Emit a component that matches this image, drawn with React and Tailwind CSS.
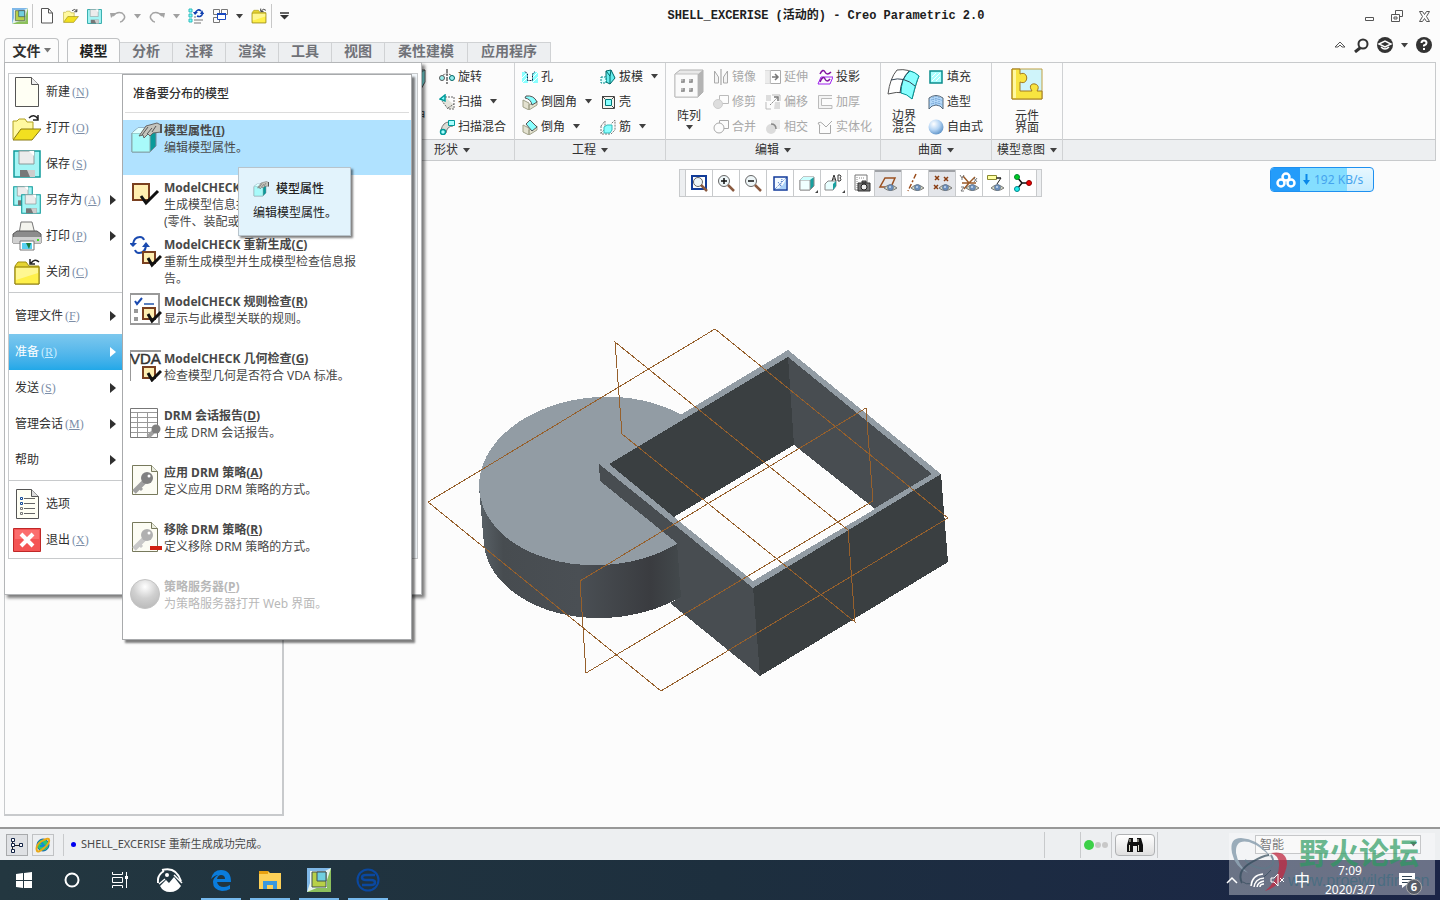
import React from 'react';

const Svg = ({ w = 16, h = w, children, className = '' }) => (
  <svg width={w} height={h} viewBox={`0 0 ${w} ${h}`} fill="none" className={`shrink-0 ${className}`} aria-hidden="true">
    {children}
  </svg>
);

const Caret = ({ className = 'text-[#404040]' }) => (
  <Svg w={7} h={5} className={className}>
    <path d="M0 0h7L3.500 4.500z" fill="currentColor" />
  </Svg>
);

/* ---------- shared icon parts ---------- */

const Eye = ({ x = 8, y = 11 }) => (
  <g transform={`translate(${x} ${y})`}>
    <path d="M0 4Q6-2 13 4Q6 9 0 4z" fill="#d8dcc8" stroke="#777" />
    <circle cx="6.500" cy="3.500" r="3" fill="#6b8fbe" stroke="#678" strokeWidth=".8" />
    <circle cx="6" cy="3" r="1" fill="#cde" />
  </g>
);

const CheckMark = ({ x = 0, y = 0 }) => (
  <g transform={`translate(${x} ${y})`}>
    <path d="M1 1h12v11H1z" fill="#ffeeb0" stroke="#7a4020" strokeWidth="2" />
    <path d="M6 7l4 7L19 5" stroke="#111" strokeWidth="3" />
  </g>
);

const KeyShape = ({ color = '#808080', tip = '#a0a0a0' }) => (
  <g>
    <path d="M16 16L4 28" stroke={tip} strokeWidth="5" />
    <path d="M9 23l3 3" stroke={tip} strokeWidth="3" />
    <circle cx="17" cy="14" r="6" fill={color} />
    <circle cx="19" cy="12" r="1.500" fill="#fff" />
  </g>
);

const Page = () => (
  <g>
    <path d="M2.500 1.500h19l6 6v23h-25z" fill="#fcfcf4" stroke="#77795c" />
    <path d="M21.500 1.500v6h6" fill="#eceee0" stroke="#77795c" />
  </g>
);

const Hand = () => (
  <g>
    <path d="M9 14l7-10 11-3 4 2v7l-8 1-3 3-2-2-4 4-1-3z" fill="#c4c4bc" stroke="#666" />
    <path d="M12 13l6-8M17 12l5-6M22 10l4-6" stroke="#555" />
    <path d="M31 2v9" stroke="#555" strokeWidth="2" />
  </g>
);

const Disk = ({ s = 28 }) => (
  <svg width={s} height={s} viewBox="0 0 28 28" aria-hidden="true" className="shrink-0">
    <path d="M1 1h26v26H1z" fill="#a4f5f5" stroke="#0f9a9a" strokeWidth="1.500" />
    <path d="M6 1h15v13H6z" fill="#ececec" stroke="#8a9a9a" />
    <path d="M16 1h5v5z" fill="#fff" />
    <path d="M7 20h15v7H7z" fill="#777" />
    <path d="M14 20h8v7h-5z" fill="#ccc" />
  </svg>
);

const FolderClosed = ({ s = 28 }) => (
  <svg width={s} height={s} viewBox="0 0 28 28" aria-hidden="true" className="shrink-0">
    <path d="M2 8l3-4h8l3 4h10v18H2z" fill="#e6d432" stroke="#a09010" />
    <path d="M2 9h24v17H2z" fill="#fff04a" stroke="#8a7a10" />
    <path d="M3 10h22v5L3 22z" fill="#fffab0" opacity=".7" />
    <path d="M26 4Q22 0 18 5m-1-4v5h5" stroke="#222" strokeWidth="1.500" fill="none" />
  </svg>
);

const FolderOpen = ({ s = 30 }) => (
  <svg width={s} height={s} viewBox="0 0 30 30" aria-hidden="true" className="shrink-0">
    <path d="M1 26V8h4l2-2h6l2 3h6v8" fill="#fff9a0" stroke="#b0a020" />
    <path d="M1 27l8-11h20l-9 11z" fill="#f2e020" stroke="#8a7a10" />
    <path d="M17 5q5-5 9 1m0-4v5h-5" stroke="#222" strokeWidth="1.500" fill="none" />
  </svg>
);

const CreoLogo = ({ s = 16 }) => (
  <svg width={s} height={s} viewBox="0 0 24 24" aria-hidden="true" className="shrink-0">
    <path d="M0 0h24v24H0z" fill="#e4f2ee" />
    <path d="M0 0h24L12 6 4 12 0 24z" fill="#7fb8e8" />
    <path d="M24 0v24H0l12-5 8-7z" fill="#8cc05c" />
    <path d="M3 3h17v17H3z" fill="#f0f8f4" />
    <path d="M5 4h14v15H5z" fill="#b8d048" stroke="#405050" />
    <path d="M10 4h9v9h-9z" fill="#70cfe0" stroke="#405050" />
  </svg>
);

/* ---------- quick access ---------- */

const QuickNew = () => (
  <Svg w={16}>
    <path d="M2.500 1v14h11V5L9.500.5h-7z" fill="#fff" stroke="#555" />
    <path d="M9.500 1v4h4" stroke="#555" />
  </Svg>
);
const Undo = ({ flip }) => (
  <Svg w={16} className={flip ? '-scale-x-100' : ''}>
    <path d="M0 5h6L1 10z" fill="#a4a4a4" />
    <path d="M3 8Q7 3 12 5q4 3 2 6-2 3-4 3" stroke="#a4a4a4" strokeWidth="1.500" />
  </Svg>
);
const Regenerate = () => (
  <Svg w={16}>
    <path d="M1 1h3v3H1zM1 6h3v3H1zM1 11h3v3H1z" fill="#7ff" stroke="#3bb" />
    <path d="M6 12h9M6 15h7M6 9h2" stroke="#777" />
    <path d="M7 5q3-5 6-2M15 5q-2 5-6 3" stroke="#1040b0" strokeWidth="1.500" />
    <path d="M5 4h5L7 7zM12 6h4l-2-4z" fill="#1040b0" />
  </Svg>
);
const Windows = () => (
  <Svg w={16}>
    <path d="M1.500 1.500h6v5h-6zM9.500 1.500h6v5h-6zM1.500 9.500h6v5h-6z" stroke="#777" />
    <path d="M5.500 5.500h8v6h-8z" fill="#fff" stroke="#1848c0" />
    <path d="M5 6h9" stroke="#1848c0" strokeWidth="2" />
  </Svg>
);

/* ---------- ribbon icons ---------- */

const ribbonIcons = {
  revolve: (
    <Svg>
      <path d="M8 0v16" stroke="#111" strokeDasharray="4 1 2 1" />
      <path d="M3 9Q3 5 8 5t5 4" stroke="#555" strokeDasharray="2 1" />
      <circle cx="3" cy="9" r="2.500" fill="#9ee" stroke="#555" />
      <circle cx="13" cy="9" r="2.500" fill="#9ee" stroke="#066" />
    </Svg>
  ),
  sweep: (
    <Svg>
      <path d="M6 3l8 7v5H9L3 7z" fill="#e4e4dc" />
      <path d="M6 3l9 0v12H9L3 7M9 14l6-4" stroke="#666" strokeDasharray="2 1" />
      <path d="M1 5l5-4v6z" fill="#8ff" stroke="#099" strokeWidth="1.500" />
    </Svg>
  ),
  blend: (
    <Svg>
      <path d="M2 11Q4 3 10 3l4 4q-6 0-7 7z" fill="#dcdcd4" stroke="#777" />
      <path d="M9.500 1.500h6v5h-6z" fill="#aff" stroke="#099" />
      <circle cx="4" cy="13" r="2.500" fill="#aff" stroke="#099" strokeWidth="1.500" />
    </Svg>
  ),
  hole: (
    <Svg>
      <path d="M0 3h4l2 2v9H0zM12 3h4v11h-6V5z" fill="#8ff" />
      <path d="M0 9l6-6M0 14l6-6M10 9l6-6M10 14l6-6" stroke="#fff" />
      <path d="M3 2.500L5.500 5v6.500h5V5L13 2.500" stroke="#124" strokeDasharray="2 1" />
    </Svg>
  ),
  round: (
    <Svg>
      <path d="M1 6l6 3v7l-6-3zM7 16l8-5V7l-8 4z" fill="#e4e2d0" stroke="#a0a088" />
      <path d="M4 2q8-1 11 6l-5 3Q9 5 3 4z" fill="#8ff" stroke="#555" />
    </Svg>
  ),
  chamfer: (
    <Svg>
      <path d="M1 6l6 3v7l-6-3zM7 16l8-5V7l-8 4z" fill="#e4e2d0" stroke="#a0a088" />
      <path d="M8 1l7 7-5 4-6-7z" fill="#8ff" stroke="#555" />
    </Svg>
  ),
  draft: (
    <Svg>
      <path d="M6 2l5-1 4 8-5 6-4-2z" fill="#6ee" stroke="#066" />
      <path d="M6 2l4 5v8M10 7l1-6" stroke="#066" />
      <path d="M1 8h5v6H1z" fill="#dff" stroke="#088" strokeDasharray="2 1" />
    </Svg>
  ),
  shell: (
    <Svg>
      <path d="M2.500 2.500h12v12h-12z" fill="#f4f4ee" stroke="#444" />
      <path d="M5.500 5.500h6v6h-6z" fill="#8ff" stroke="#077" />
      <path d="M2 2l3 3M12 12l2 2M12 5l2-2" stroke="#444" />
    </Svg>
  ),
  rib: (
    <Svg>
      <path d="M1 7v8h10l4-4V1l-4 4M1 7l4-5v8l-4 4" stroke="#777" strokeDasharray="2 1" />
      <path d="M4 8l3-2h5v5l-2 3H4z" fill="#8ff" stroke="#3bb" />
    </Svg>
  ),
  mirror: (
    <Svg>
      <path d="M1.500 2l4 6v6h-4zM14.500 2l-4 6v6h4z" stroke="#aaa" fill="#f4f4f4" />
      <path d="M8 0v16" stroke="#999" />
    </Svg>
  ),
  trim: (
    <Svg>
      <path d="M6.500 1.500h9v8h-9z" stroke="#bbb" />
      <circle cx="5" cy="10" r="4.500" fill="#ddd" stroke="#ccc" />
    </Svg>
  ),
  merge: (
    <Svg>
      <path d="M10 1.500h5.500v8H11M6.500 4V1.500H10" stroke="#aaa" />
      <circle cx="6" cy="9" r="5" stroke="#aaa" />
    </Svg>
  ),
  extend: (
    <Svg>
      <path d="M5.500 1.500h10v13h-10z" fill="#fff" stroke="#aaa" />
      <path d="M0 1.500h5v13H0" fill="#ececec" stroke="#ddd" />
      <path d="M7 8h6M10 5l3 3-3 3" stroke="#777" strokeWidth="1.500" />
    </Svg>
  ),
  offset: (
    <Svg>
      <path d="M1 1h5v6H1zM10 8h5v7H9z" fill="#ddd" />
      <path d="M1 8v7h5M7 1h8v6" stroke="#bbb" />
      <path d="M5 11l7-7" stroke="#888" strokeDasharray="2 1" />
      <path d="M9 3h4v4" stroke="#777" strokeWidth="1.500" />
    </Svg>
  ),
  intersect: (
    <Svg>
      <path d="M6 1h9v9H6z" fill="#e8e8e8" />
      <circle cx="6" cy="10" r="5" fill="#dcdcdc" />
      <path d="M6 5q5 0 5 5" stroke="#888" strokeWidth="1.500" />
    </Svg>
  ),
  project: (
    <Svg>
      <path d="M3 5q3-6 5-2t6 0" stroke="#8010a0" strokeWidth="1.500" />
      <path d="M4 8h12l-3 7H1z" stroke="#a020f0" />
      <path d="M3 13q3-7 5-3t5 0" stroke="#8010a0" strokeWidth="1.500" />
    </Svg>
  ),
  thicken: (
    <Svg>
      <path d="M15 1.500H1.500v13H15v-3H4.500v-7H15" fill="#f4f4f4" stroke="#bbb" />
    </Svg>
  ),
  solidify: (
    <Svg>
      <path d="M1 4q3-2 5 1l3 3 6-6M2.500 6v8.500h11V6M1 4l2 3" stroke="#aaa" />
    </Svg>
  ),
  fill: (
    <Svg>
      <path d="M2 2h12v12H2z" fill="#aff" stroke="#0a8c8c" strokeWidth="1.500" />
      <path d="M4 12l8-8M4 8l4-4M8 12l4-4" stroke="#fff" />
    </Svg>
  ),
  style: (
    <Svg>
      <path d="M1 4q7-5 14 0v11l-3-3q-4-2-8 0l-3 3z" fill="#b4d8f8" stroke="#567" />
      <path d="M5 3v9M8 2v9M11 3v9M1 7q7-4 14 0M1 11q7-4 14 0" stroke="#6a9cd0" strokeDasharray="1 1" />
    </Svg>
  ),
  freestyle: (
    <Svg>
      <defs>
        <radialGradient id="ball" cx=".35" cy=".3" r=".8">
          <stop offset="0" stopColor="#fff" />
          <stop offset=".5" stopColor="#b4d4f4" />
          <stop offset="1" stopColor="#5088c0" />
        </radialGradient>
      </defs>
      <circle cx="8" cy="8" r="7.500" fill="url(#ball)" />
    </Svg>
  ),
};

const ExtrudeIcon = () => (
  <Svg w={30} h={32}>
    <path d="M2 8L12 2h15v12L18 30H2z" fill="#8ff" stroke="#555" />
    <path d="M2 8h16v22M18 8l9-6" stroke="#555" strokeDasharray="2 1" />
  </Svg>
);
const PatternIcon = () => (
  <Svg w={30} h={32}>
    <path d="M1 6l5-4h23v22l-5 5H1z" fill="#e8e8e8" stroke="#b0b0b0" />
    <path d="M1 6h23v23H1z" fill="#fafafa" stroke="#c0c0c0" />
    <path d="M24 6l5-4v22l-5 5z" fill="#b4b4b4" />
    <path d="M7 11h4v4H7zM15 11h4v4h-4zM7 20h4v4H7zM15 20h4v4h-4z" fill="#b8b8b8" />
    <path d="M7 14h3v-3M15 14h3v-3M7 23h3v-3M15 23h3v-3" stroke="#808080" />
  </Svg>
);
const BoundaryIcon = () => (
  <Svg w={34} h={32}>
    <path d="M1 26Q3 10 10 2q12-2 22 6-2 4-7 23-6-10-24-5z" fill="#fff" stroke="#555" />
    <path d="M16 12q3-6 7-9 5 1 9 5-3 6-7 23-5-5-11-6 0-6 2-13z" fill="#8ff" stroke="#099" />
    <path d="M4 12q13-4 24 6M22 3q-8 8-9 22" stroke="#345" />
  </Svg>
);
const ComponentIcon = () => (
  <Svg w={32} h={32}>
    <path d="M1 1h30v30H1z" fill="#cff4fa" stroke="#c0a040" />
    <path d="M1 1h8v5c9-4 9 12 0 8v9h12c-7-10 11-9 5 0h5v8H1z" fill="#f8e440" stroke="#a07820" />
    <path d="M2 2h3v28H2z" fill="#fff8a0" />
  </Svg>
);

/* ---------- model view toolbar ---------- */

const lens = (
  <g>
    <circle cx="8" cy="8" r="5.500" fill="#eef6f8" stroke="#666" />
    <path d="M12 12l6 6" stroke="#8a5a40" strokeWidth="2.500" />
  </g>
);

const viewTools = [
  { name: '重新调整', icon: <Svg w={20}><path d="M3 3h14v13H3z" stroke="#123c98" strokeWidth="2" /><circle cx="9" cy="9" r="4.500" fill="#eef6f8" stroke="#666" /><path d="M12 12l6 6" stroke="#8a5a40" strokeWidth="2.500" /></Svg> },
  { name: '放大', icon: <Svg w={20}>{lens}<path d="M5 8h6M8 5v6" stroke="#111" strokeWidth="1.500" /></Svg> },
  { name: '缩小', icon: <Svg w={20}>{lens}<path d="M5 8h6" stroke="#111" strokeWidth="1.500" /></Svg> },
  { name: '重画', icon: <Svg w={20}><path d="M4 4h13v13H4z" fill="#f4faff" stroke="#103a9a" strokeWidth="1.500" /><path d="M16 5v11H5q9-1 11-11z" fill="#a8d0f8" /><path d="M5 16L16 5M8 9l4 5M12 6l-2 8" stroke="#3a6ac0" strokeDasharray="1 1" /></Svg> },
  { name: '显示样式', corner: true, icon: <Svg w={20}><path d="M3 7l3-3h11v9l-4 4H3z" fill="#18a0a0" stroke="#888" /><path d="M3 7h10v10H3z" fill="#f0ffff" stroke="#999" /><path d="M3 7l3-3h11l-4 3z" fill="#cff" /></Svg> },
  { name: '已命名视图', corner: true, icon: <Svg w={20}><path d="M1 11l3-3h8v5l-3 4H1z" fill="#e8ffff" stroke="#888" /><path d="M9 11l3-3v5l-3 4z" fill="#18a0a0" /><path d="M8 8l2-6 2 6M9 6h2M14 2v6h2q2-1 0-3 2-2 0-3h-2" stroke="#333" /></Svg> },
  { name: '视图管理器', icon: <Svg w={20}><path d="M4 2h12v15H4z" fill="#fff" stroke="#777" /><path d="M6 4v12M8 5h6" stroke="#888" strokeDasharray="1 1" /><path d="M7 10h12v8H7zM11 8h4v2h-4z" fill="#777" stroke="#333" /><circle cx="13" cy="14" r="3" fill="#eee" stroke="#222" /></Svg> },
  { name: '平面显示', on: true, icon: <Svg w={20}><path d="M7 5h10l-4 9H2z" stroke="#9a5020" strokeWidth="1.500" /><Eye x={6} y={11} /></Svg> },
  { name: '轴显示', icon: <Svg w={20}><path d="M11 1L3 18" stroke="#9a4a18" strokeWidth="1.500" strokeDasharray="5 2 2 2" /><Eye x={6} y={11} /></Svg> },
  { name: '点显示', on: true, icon: <Svg w={20}><path d="M3 3l4 4m0-4L3 7M12 4l4 4m0-4l-4 4M2 12l4 4m0-4l-4 4" stroke="#8a3c10" strokeWidth="1.500" /><Eye x={7} y={11} /></Svg> },
  { name: '坐标系显示', icon: <Svg w={20}><path d="M4 3l6 7 6-6M3 10h14M10 10l-5 6" stroke="#9a5a28" strokeWidth="1.500" /><path d="M1 2l2 3 2-3M3 5v2M15 5l3 4m0-4l-3 4M2 14h3l-3 4h3" stroke="#777" /><Eye x={7} y={11} /></Svg> },
  { name: '注释显示', icon: <Svg w={20}><path d="M1.500 2.500h9v4h-9z" fill="#ffffa0" stroke="#8a8a30" /><path d="M11 5h4l-4 6M10 5h5" stroke="#222" /><Eye x={5} y={11} /></Svg> },
  { name: '旋转中心', icon: <Svg w={20}><path d="M4 4l5 6-5 6M9 10h8" stroke="#111" strokeWidth="1.500" /><circle cx="4" cy="4" r="2.500" fill="#0c2" stroke="#083" /><circle cx="4" cy="16" r="2.500" fill="#2ee" stroke="#088" /><circle cx="16" cy="10" r="2.500" fill="#e00" stroke="#800" /></Svg> },
];

/* ---------- file menu ---------- */

const fileMenu = [
  [
    { label: '新建', k: 'N', icon: <Svg w={28} h={32}><path d="M2.500 1.500h16l7 7v22h-23z" fill="#fffff4" stroke="#555" /><path d="M18.500 1.500v7h7" fill="#eee" stroke="#555" /></Svg> },
    { label: '打开', k: 'O', icon: <FolderOpen /> },
    { label: '保存', k: 'S', icon: <Disk /> },
    { label: '另存为', k: 'A', sub: true, icon: <span className="relative block h-7 w-7"><Disk s={20} /><span className="absolute left-2 top-2"><Disk s={20} /></span></span> },
    {
      label: '打印', k: 'P', sub: true,
      icon: (
        <Svg w={30}>
          <path d="M9 1h11l3 12H7z" fill="#f4f4ee" stroke="#777" />
          <path d="M1 13l4-3h20l4 3v9H1z" fill="#8c8c8c" stroke="#555" />
          <path d="M1 16h28v6H1z" fill="#d0d0d0" />
          <path d="M25 18h2v2h-2z" fill="#4d2" />
          <path d="M8 20h14v9H8z" fill="#fff" stroke="#777" />
          <path d="M10 22h10v6H10z" fill="#58d0f0" />
          <path d="M14 22h5l-2 6z" fill="#1a7a3a" />
        </Svg>
      ),
    },
    { label: '关闭', k: 'C', icon: <FolderClosed /> },
  ],
  [
    { label: '管理文件', k: 'F', sub: true },
    { label: '准备', k: 'R', sub: true, active: true },
    { label: '发送', k: 'S', sub: true },
    { label: '管理会话', k: 'M', sub: true },
    { label: '帮助', sub: true },
  ],
  [
    {
      label: '选项',
      icon: (
        <Svg w={28} h={32}>
          <path d="M3.500 1.500h15l7 7v22h-22z" fill="#fffff4" stroke="#555" />
          <path d="M18.500 1.500v7h7" fill="#ddd" stroke="#555" />
          <path d="M11 10.500h11M11 15.500h11M11 20.500h11M11 25.500h11" stroke="#666" />
          <path d="M7.500 9.500h2v2h-2zM7.500 14.500h2v2h-2z" stroke="#134a9a" />
          <path d="M7.500 19.500h2v2h-2zM7.500 24.500h2v2h-2z" stroke="#777" />
        </Svg>
      ),
    },
    {
      label: '退出', k: 'X',
      icon: (
        <Svg w={28} h={24}>
          <path d="M.5.5h27v23H.5z" fill="#f45454" stroke="#c02828" />
          <path d="M2 2h24v9H2z" fill="#ff8080" opacity=".6" />
          <path d="M8 6l12 12M20 6L8 18" stroke="#fff" strokeWidth="4" />
        </Svg>
      ),
    },
  ],
];

const PropsIcon = ({ s = 32 }) => (
  <svg width={s} height={s} viewBox="0 0 32 32" aria-hidden="true" fill="none" className="shrink-0">
    <path d="M2 11l6-5h18v18l-6 6H2z" fill="#0a9a9a" stroke="#789" />
    <path d="M2 11h18v19H2z" fill="#a8fafa" stroke="#8aa" />
    <path d="M2 11l6-5h18l-6 5z" fill="#e0ffff" />
    <Hand />
  </svg>
);

const prepareMenu = [
  { title: '模型属性', k: 'I', lines: ['编辑模型属性。'], on: true, icon: <PropsIcon /> },
  { title: 'ModelCHECK 交互', k: 'I', lines: ['生成模型信息报告。', '(零件、装配或绘图)'], icon: <Svg w={32}><path d="M3 5h16v16H3z" fill="#ffeeb0" stroke="#7a4020" strokeWidth="2" /><path d="M11 17l5 7L28 12" stroke="#111" strokeWidth="3" /></Svg> },
  {
    title: 'ModelCHECK 重新生成', k: 'C', lines: ['重新生成模型并生成模型检查信息报', '告。'],
    icon: (
      <Svg w={32}>
        <path d="M3 8Q4 1 10 1q3 0 4 3M16 10q-1 7-7 7-3 0-4-3" stroke="#1a4ab0" strokeWidth="2" />
        <path d="M-1 7h8l-4 4zM12 11h8l-4-5z" fill="#1a4ab0" />
        <CheckMark x={12} y={15} />
      </Svg>
    ),
  },
  { title: 'ModelCHECK 规则检查', k: 'R', lines: ['显示与此模型关联的规则。'], icon: <Svg w={32}><path d="M0 1h29v30H0z" fill="#fff" stroke="#999" strokeWidth="2" /><path d="M14 11h10" stroke="#5a80c0" strokeWidth="2" /><path d="M5 8l2 3 5-6" stroke="#1a4ab0" strokeWidth="2" /><path d="M4 16h4v4H4zM4 24h4v4H4z" fill="#999" /><CheckMark x={12} y={14} /></Svg> },
  { title: 'ModelCHECK 几何检查', k: 'G', lines: ['检查模型几何是否符合 VDA 标准。'], icon: <Svg w={32}><path d="M0 1h31M0 1v30" stroke="#999" strokeWidth="2" /><text x="0" y="14" fontSize="15" fontFamily="Liberation Sans" fill="#333" stroke="#333" strokeWidth=".5">VDA</text><CheckMark x={12} y={16} /></Svg> },
  { title: 'DRM 会话报告', k: 'D', lines: ['生成 DRM 会话报告。'], icon: <Svg w={32}><path d="M.5 1.500h27v29H.5z" fill="#fff" stroke="#777" /><path d="M1 5.500h26M1 10.500h26M1 15.500h26M1 20.500h26M1 25.500h26M7.500 5v25M17.500 5v25" stroke="#999" /><path d="M26 22l-8 8" stroke="#a0a0a0" strokeWidth="4" /><circle cx="26" cy="22" r="4.500" fill="#808080" /></Svg> },
  { title: '应用 DRM 策略', k: 'A', lines: ['定义应用 DRM 策略的方式。'], icon: <Svg w={32}><Page /><KeyShape /></Svg> },
  { title: '移除 DRM 策略', k: 'R', lines: ['定义移除 DRM 策略的方式。'], icon: <Svg w={32}><Page /><KeyShape color="#b0b0b0" tip="#c8c8c8" /><path d="M20 25h12v4H20z" fill="#d02010" /></Svg> },
  {
    title: '策略服务器', k: 'P', lines: ['为策略服务器打开 Web 界面。'], off: true,
    icon: (
      <Svg w={32}>
        <defs>
          <radialGradient id="orb" cx=".5" cy=".25" r=".8">
            <stop offset="0" stopColor="#fff" />
            <stop offset=".5" stopColor="#d0d0d0" />
            <stop offset="1" stopColor="#b8b8b8" />
          </radialGradient>
        </defs>
        <circle cx="15" cy="16" r="14.500" fill="url(#orb)" stroke="#c4c4c4" />
      </Svg>
    ),
  },
];

const FileMenu = () => (
  <nav aria-label="文件" className="absolute left-1 top-[62px] z-20 h-[533px] w-[418px] border border-[#b4b6b8] bg-white pl-[3px] pt-[10px] shadow-[3px_3px_3px_rgba(0,0,0,0.5)]">
    <div className="w-[410px] border border-[#c8cacc] bg-[#f3f8fc]">
      <div className="w-[114px] bg-white">
        {fileMenu.map((group, g) => (
          <div key={g} className={g ? 'mt-[2px] border-t border-[#c8cacc] pt-[5px]' : ''}>
            {group.map((item) => (
              <button
                key={item.label}
                className={`flex h-9 w-full items-center text-xs ${item.icon ? 'pl-1' : 'pl-[6px]'} ${item.active ? 'bg-linear-to-b from-[#7cc8ee] to-[#20a8e8] text-white' : 'text-[#303030]'}`}
              >
                {item.icon && <span className="mr-[5px] flex w-7 justify-center">{item.icon}</span>}
                <span className="whitespace-nowrap">{item.label}</span>
                {item.k && (
                  <span className={`ml-[2px] font-['Liberation_Serif'] ${item.active ? 'text-[#c8ecff]' : 'text-[#7c8ea8]'}`}>
                    (<u>{item.k}</u>)
                  </span>
                )}
                {item.sub && (
                  <Svg w={6} h={10} className="ml-auto mr-[7px]">
                    <path d="M0 0l6 5-6 5z" fill="currentColor" />
                  </Svg>
                )}
              </button>
            ))}
          </div>
        ))}
      </div>
    </div>
  </nav>
);

const PrepareMenu = () => (
  <section className="absolute left-[122px] top-[74px] z-30 h-[566px] w-[290px] border border-[#a8aaac] bg-white text-xs shadow-[3px_3px_2px_rgba(0,0,0,0.5)]">
    <h2 className="mx-[2px] mb-[7px] flex h-[38px] items-center border-b border-[#dcdcdc] pl-2 font-medium text-[#303030]">准备要分布的模型</h2>
    {prepareMenu.map((item) => (
      <button
        key={item.title}
        disabled={item.off}
        className={`flex w-full gap-[2px] pl-[7px] pt-[2px] text-left leading-[17px] ${item.on ? 'mb-[2px] h-[55px] bg-[#b0e2ff] text-[#202020]' : 'h-[57px]'} ${item.off ? 'text-[#b8b8b8]' : 'text-[#484848]'}`}
      >
        {item.icon}
        <span className="whitespace-nowrap">
          <strong className="block">{item.title}(<u>{item.k}</u>)</strong>
          {item.lines.map((l) => <span key={l} className="block">{l}</span>)}
        </span>
      </button>
    ))}
    <div role="tooltip" className="absolute left-[115px] top-[92px] flex h-[69px] w-[113px] flex-col gap-[6px] border border-[#b8c4cc] bg-[#e2f3fc] pl-[14px] pt-3 text-[#202020] shadow-[2px_2px_2px_rgba(0,0,0,0.5)]">
      <span className="flex items-center gap-[7px] font-medium leading-[18px]"><PropsIcon s={16} />模型属性</span>
      <span className="whitespace-nowrap leading-[18px]">编辑模型属性。</span>
    </div>
  </section>
);

/* ---------- ribbon ---------- */

const Tool = ({ icon, label, menu, off }) => (
  <button disabled={off} className={`flex h-[25px] items-center gap-[3px] whitespace-nowrap ${off ? 'text-[#a8a8a8]' : 'text-[#303030]'}`}>
    {ribbonIcons[icon]}
    {label}
    {menu && <Caret className="ml-[5px] text-[#404040]" />}
  </button>
);

const Big = ({ icon, lines, menu, className = '' }) => (
  <button className={`flex flex-col items-center justify-start pt-1 ${className}`}>
    {icon}
    <span className="mt-[10px] flex flex-col leading-3">
      {lines.map((l) => <span key={l}>{l}</span>)}
    </span>
    {menu && <Caret className="mt-[3px] text-[#404040]" />}
  </button>
);

const Group = ({ label, className, children }) => (
  <section className={`flex shrink-0 flex-col border-r border-[#d0d2d4] ${className}`}>
    <div className="flex h-[76px] pt-px">{children}</div>
    <button className="flex h-[21px] items-center justify-center gap-[5px] border-t border-[#c8cacc] bg-[#edeff1]">
      {label}
      {label && <Caret />}
    </button>
  </section>
);

const Col = ({ className = '', children }) => <div className={`flex shrink-0 flex-col items-start ${className}`}>{children}</div>;

const Ribbon = () => (
  <div className="mx-1 flex h-[99px] border border-[#c8cacc] text-xs text-[#303030]">
    <Group className="w-[385px]" />
    <Group label="形状" className="w-[125px]">
      <Big className="ml-[7px] w-[32px]" icon={<ExtrudeIcon />} lines={['拉伸']} />
      <Col className="ml-[10px]">
        <Tool icon="revolve" label="旋转" />
        <Tool icon="sweep" label="扫描" menu />
        <Tool icon="blend" label="扫描混合" />
      </Col>
    </Group>
    <Group label="工程" className="w-[151px]">
      <Col className="ml-[7px] w-[78px]">
        <Tool icon="hole" label="孔" />
        <Tool icon="round" label="倒圆角" menu />
        <Tool icon="chamfer" label="倒角" menu />
      </Col>
      <Col>
        <Tool icon="draft" label="拔模" menu />
        <Tool icon="shell" label="壳" />
        <Tool icon="rib" label="筋" menu />
      </Col>
    </Group>
    <Group label="编辑" className="w-[215px]">
      <Big className="ml-[7px] w-8" icon={<PatternIcon />} lines={['阵列']} menu />
      <Col className="ml-2 w-[52px]">
        <Tool off icon="mirror" label="镜像" />
        <Tool off icon="trim" label="修剪" />
        <Tool off icon="merge" label="合并" />
      </Col>
      <Col className="w-[52px]">
        <Tool off icon="extend" label="延伸" />
        <Tool off icon="offset" label="偏移" />
        <Tool off icon="intersect" label="相交" />
      </Col>
      <Col>
        <Tool icon="project" label="投影" />
        <Tool off icon="thicken" label="加厚" />
        <Tool off icon="solidify" label="实体化" />
      </Col>
    </Group>
    <Group label="曲面" className="w-[111px]">
      <Big className="ml-[5px] w-9" icon={<BoundaryIcon />} lines={['边界', '混合']} />
      <Col className="ml-[6px]">
        <Tool icon="fill" label="填充" />
        <Tool icon="style" label="造型" />
        <Tool icon="freestyle" label="自由式" />
      </Col>
    </Group>
    <Group label="模型意图" className="w-[71px]">
      <Big className="w-full" icon={<ComponentIcon />} lines={['元件', '界面']} />
    </Group>
    <div className="flex flex-1 flex-col justify-end">
      <div className="h-[21px] border-t border-[#c8cacc] bg-[#edeff1]" />
    </div>
  </div>
);

/* ---------- title bar and tabs ---------- */

const TitleBar = () => (
  <header className="grid h-8 grid-cols-[1fr_auto_1fr] items-center pl-3 pr-[10px]">
    <div className="flex items-center">
      <CreoLogo />
      <div className="ml-1 mr-[6px] h-6 w-px bg-[#c8c8c8]" />
      <div className="flex items-center gap-2">
        <button aria-label="新建"><QuickNew /></button>
        <button aria-label="打开"><FolderOpen s={16} /></button>
        <button aria-label="保存"><Disk s={15} /></button>
        <button aria-label="撤消" className="flex items-center gap-2"><Undo /><Caret className="text-[#a0a0a0]" /></button>
        <button aria-label="重做" className="flex items-center gap-2"><Undo flip /><Caret className="text-[#a0a0a0]" /></button>
        <button aria-label="重新生成"><Regenerate /></button>
        <button aria-label="窗口" className="flex items-center gap-2"><Windows /><Caret /></button>
        <button aria-label="关闭"><FolderClosed s={16} /></button>
      </div>
      <div className="ml-1 mr-2 h-6 w-px bg-[#c8c8c8]" />
      <button aria-label="自定义">
        <Svg w={9} h={8}><path d="M0 1h9" stroke="#333" strokeWidth="1.500" /><path d="M0 3h9L4.500 7.500z" fill="#333" /></Svg>
      </button>
    </div>
    <h1 className="whitespace-nowrap pl-[210px] font-['Liberation_Mono','Noto_Sans_CJK_SC',monospace] text-xs font-bold text-[#202020]">SHELL_EXCERISE (活动的) - Creo Parametric 2.0</h1>
    <div className="flex items-center justify-end gap-4 text-[#555]">
      <button aria-label="最小化"><Svg w={10} h={12}><path d="M.5 7.500h8v3h-8z" stroke="currentColor" /></Svg></button>
      <button aria-label="还原"><Svg w={12}><path d="M4.500.5h7v6h-3M.5 4.500h8v7h-8zM3 7h3v2H3zM4.500.5v4" stroke="currentColor" /></Svg></button>
      <button aria-label="关闭窗口"><Svg w={11}><path d="M.5.5h3l2 3 2-3h3l-3 5 3 5h-3l-2-3-2 3h-3l3-5z" stroke="currentColor" /></Svg></button>
    </div>
  </header>
);

const tabs = [
  { label: '分析', w: 'w-[53px]' },
  { label: '注释', w: 'w-[53px]' },
  { label: '渲染', w: 'w-[53px]' },
  { label: '工具', w: 'w-[53px]' },
  { label: '视图', w: 'w-[53px]' },
  { label: '柔性建模', w: 'w-[83px]' },
  { label: '应用程序', w: 'w-[83px]' },
];

const TabRow = () => (
  <div className="flex h-[30px] items-end justify-between px-1">
    <div className="flex items-end text-sm font-bold">
      <button className="mr-2 flex h-6 w-[55px] items-center justify-center gap-[3px] rounded-t-sm border border-b-0 border-[#c0c2c4] text-[#303030]">
        文件<Caret className="text-[#777]" />
      </button>
      <button className="h-6 w-[53px] rounded-t-sm border border-b-0 border-[#c0c2c4] bg-[#fcfcfc] text-[#202020]">模型</button>
      {tabs.map((t) => (
        <button key={t.label} className={`h-5 border-r border-t border-[#d0d2d4] bg-[#edeff1] pb-[3px] leading-4 text-[#707278] ${t.w}`}>{t.label}</button>
      ))}
    </div>
    <div className="mb-2 mr-1 flex h-[18px] items-center gap-2">
      <button aria-label="最小化功能区"><Svg w={12} h={8}><path d="M1 6l5-5 5 5H8L6 4 4 6z" stroke="#555" /></Svg></button>
      <button aria-label="搜索"><Svg w={15}><circle cx="9" cy="6" r="4.500" stroke="#333" strokeWidth="2" /><path d="M6 10l-5 4" stroke="#333" strokeWidth="3" /></Svg></button>
      <button aria-label="学习" className="flex items-center gap-2">
        <Svg w={16}><circle cx="8" cy="8" r="8" fill="#333" /><path d="M2 7l6-3 6 3-6 3zM4 10q4 4 8 0" stroke="#fff" strokeWidth="1.500" /></Svg>
        <Caret />
      </button>
      <button aria-label="帮助"><Svg w={16}><circle cx="8" cy="8" r="8" fill="#333" /><path d="M5.500 6q0-2.500 2.500-2.500T10.500 6Q10.500 7.500 8 8.500v1M8 11v2" stroke="#fff" strokeWidth="2" /></Svg></button>
    </div>
  </div>
);

/* ---------- graphics area ---------- */

const Model = () => (
  <svg viewBox="284 197 1156 630" className="min-h-0 w-full flex-1" fill="none" shapeRendering="crispEdges" role="img" aria-label="SHELL_EXCERISE">
    <defs>
      <linearGradient id="side" x1="0" x2="1">
        <stop offset="0" stopColor="#5a6268" />
        <stop offset=".12" stopColor="#474c50" />
        <stop offset=".5" stopColor="#4a4f54" />
        <stop offset=".85" stopColor="#3a3c40" />
        <stop offset="1" stopColor="#43494c" />
      </linearGradient>
    </defs>
    <path d="M479 487L484 545A122 84 -4 0 0 681 597L677 543z" fill="url(#side)" />
    <ellipse cx="601" cy="481" rx="122" ry="84" transform="rotate(-4 601 481)" fill="#929ca4" />
    <path d="M599 464L600 481L677 543L681 597L670 603L760 676L753 587z" fill="#484d51" />
    <path d="M941 474L948 562L760 676L753 587z" fill="#3a3f41" />
    <path d="M788 350L941 474L753 588L599 464z" fill="#929ca4" />
    <path d="M788 357L932 474L753 581L609 464z" fill="#484d51" />
    <path d="M788 357L794 445L674 517L609 464z" fill="#3a3f41" />
    <path d="M794 445L875 509L753 581L674 517z" fill="#fcfcfc" />
    <g stroke="#96602c">
      <path d="M715 329L948 518L661 691L428 502z" />
      <path d="M615 342L622 434L855 622L848 530z" />
      <path d="M866 408L873 501L586 673L580 581z" />
    </g>
  </svg>
);

const Workspace = () => (
  <main className="relative flex min-h-0 flex-1">
    <aside className="mb-[11px] ml-1 w-[280px] shrink-0 border-b-2 border-l border-r-2 border-[#c8cacc]" />
    <div className="flex min-w-0 flex-1 flex-col items-center pt-2">
      <div className="mr-1 flex h-7 border border-[#c8cacc] bg-white">
        <div className="w-[5px] bg-[#edeff1]" />
        {viewTools.map((t) => (
          <button
            key={t.name}
            aria-label={t.name}
            aria-pressed={!!t.on}
            className={`relative flex w-[27px] items-center justify-center border-l border-[#c8cacc] ${t.on ? 'bg-[#e4e6ea] shadow-[inset_0_2px_0_#a0a2a6]' : ''}`}
          >
            {t.icon}
            {t.corner && <Svg w={3} className="absolute bottom-[3px] right-[2px]"><path d="M3 0v3H0z" fill="#444" /></Svg>}
          </button>
        ))}
        <div className="w-[5px] border-l border-[#c8cacc] bg-[#edeff1]" />
      </div>
      <Model />
    </div>
    <div className="absolute right-[66px] top-[6px] flex h-[25px] w-[104px] items-center overflow-hidden rounded-sm border border-[#1e90f0] bg-linear-to-b from-[#e8f8ff] to-[#c8ecff]">
      <span className="flex h-full w-[29px] items-center justify-center bg-[#249cfa]">
        <Svg w={20} h={16}>
          <g stroke="#fff" strokeWidth="2.500">
            <circle cx="10" cy="5" r="3.500" />
            <circle cx="5" cy="11" r="3.500" />
            <circle cx="15" cy="11" r="3.500" />
          </g>
        </Svg>
      </span>
      <span className="flex h-full flex-1 items-center gap-1 whitespace-nowrap bg-linear-to-r from-[#84deff] from-65% to-transparent to-65% pl-[3px] text-xs text-[#45a4ee]">
        <Svg w={7} h={11}><path d="M2.500 0h2v6H7l-3.500 5L0 6h2.500z" fill="#0a88e8" /></Svg>
        192 KB/s
      </span>
    </div>
  </main>
);

/* ---------- status bar ---------- */

const StatusBar = () => (
  <footer className="flex h-[33px] shrink-0 items-center border-t-2 border-[#989898] bg-[#edeff1] text-xs text-[#484848]">
    <button aria-label="模型树" className="ml-[6px] flex h-[22px] w-[22px] items-center justify-center border border-[#a8aaac] bg-[#dfe1e4]">
      <Svg><path d="M3.500 2v12M3 8.500h8" stroke="#222" /><path d="M2.500 1.500h3v3h-3zM2.500 6.500h3v3h-3zM2.500 12.500h3v3h-3zM10.500 6.500h3v3h-3z" fill="#fff" stroke="#124" /></Svg>
    </button>
    <button aria-label="浏览器" className="ml-1 flex h-[22px] w-[22px] items-center justify-center border border-[#c0c2c4]">
      <Svg><circle cx="8" cy="8" r="6" fill="#2cc870" stroke="#0a60b0" /><path d="M5 9h6M6 5l5 6" stroke="#1090d0" strokeWidth="2" /><path d="M2 14Q0 8 7 4q7-4 7-1 1 3-5 8t-7 3z" stroke="#e8a818" strokeWidth="2" /></Svg>
    </button>
    <div className="ml-[9px] h-[22px] w-px bg-[#c8cacc]" />
    <span className="ml-[7px] h-[5px] w-[5px] rounded-full bg-[#0000f0]" />
    <output className="ml-[5px] flex-1 text-[11px]">SHELL_EXCERISE 重新生成成功完成。</output>
    <div className="flex h-[26px] w-9 border-l border-[#c8cacc]" />
    <div className="flex h-[26px] w-[31px] items-center justify-center gap-px border-l border-[#c8cacc]">
      <span className="h-[10px] w-[10px] rounded-full bg-[#3cd048]" />
      <span className="h-[6px] w-[6px] rounded-full bg-[#c8c8c8]" />
      <span className="h-[6px] w-[6px] rounded-full bg-[#c8c8c8]" />
    </div>
    <div className="flex h-[26px] w-[47px] items-center justify-center border-x border-[#c8cacc]">
      <button aria-label="查找" className="flex h-[22px] w-[40px] items-center justify-center rounded-sm border border-[#b0b2b4] bg-linear-to-b from-white to-[#e0e0e0]">
        <Svg w={18}><path d="M3 2h4v4h4V2h4l2 7v7h-6v-6H7v6H1V9z" fill="#111" /><path d="M4 3v3M3.500 9v6M12.500 9v6M12 3v3" stroke="#ddc" /></Svg>
      </button>
    </div>
    <label className="relative ml-[97px] mr-[19px] flex items-center">
      <span className="sr-only">选择过滤器</span>
      <select className="h-[19px] w-[166px] appearance-none border border-[#a8aaac] bg-[#f6f6f6] pl-1 text-xs leading-4 text-[#303030]">
        <option>智能</option>
      </select>
      <Caret className="absolute right-1 text-[#202020]" />
    </label>
  </footer>
);

/* ---------- windows taskbar ---------- */

const apps = [
  { name: '照片', w: 'w-[52px]', icon: <Svg w={26} h={24}><path d="M3 18l6-6 3 3 5-6 7 9q-4 6-11 6T3 18z" fill="#fff" /><path d="M1 15q-1-8 6-12M5 2q14-4 19 11" stroke="#fff" strokeWidth="2" /><path d="M2 16l6-5M17 7l8 8" stroke="#fff" strokeWidth="1.500" /><circle cx="10" cy="7" r="2" fill="#fff" /></Svg> },
  { name: 'Edge', w: 'w-[49px]', open: true, icon: <Svg w={22}><path d="M1 10Q3 1 11 1q10 0 10 12H7q1 5 7 5 3 0 6-2v4q-3 2-8 2-9-1-9-9 0-4 5-7-3 0-7 4zM7 10h8q0-4-4-4-3 0-4 4z" fill="#0a7cdc" fillRule="evenodd" /></Svg> },
  { name: '文件资源管理器', w: 'w-[49px]', open: true, icon: <Svg w={22} h={20}><path d="M0 1h9l2 2h11v16H0z" fill="#fcd058" /><path d="M0 1h9v3H0z" fill="#e8a010" /><path d="M4 19v-8h14v8h-4v-4H8v4z" fill="#3a98e0" /></Svg> },
  { name: 'Creo Parametric', w: 'w-[49px]', open: true, icon: <CreoLogo s={24} /> },
  { name: '搜狗', w: 'w-[49px]', open: true, icon: <Svg w={24}><circle cx="12" cy="12" r="10.500" stroke="#0a48a0" strokeWidth="2" /><path d="M19 7h-9q-4 0-4 2.500t4 2.500h5q4 0 4 2.500T15 17H6" stroke="#0a48a0" strokeWidth="2.500" /></Svg> },
];

const Taskbar = () => (
  <footer className="flex h-10 shrink-0 items-stretch bg-linear-to-r from-[#233740] via-[#1d2f3e] to-[#1b2547] text-white">
    <button aria-label="开始" className="flex w-12 items-center justify-center"><Svg><path d="M0 2l7-1v7H0zM8 1l8-1v8H8zM0 9h7v7l-7-1zM8 9h8v8l-8-1z" fill="#fff" /></Svg></button>
    <button aria-label="Cortana" className="flex w-12 items-center justify-center"><Svg><circle cx="8" cy="8" r="6.500" stroke="#fff" strokeWidth="2" /></Svg></button>
    <button aria-label="任务视图" className="flex w-12 items-center justify-center"><Svg><path d="M.5 0v2.500h10V0M.5 16v-2.500h10V16M.5 5.500h10v5H.5zM14.500 0v16" stroke="#fff" /><path d="M13 4h3v3h-3z" fill="#fff" /></Svg></button>
    {apps.map((a) => (
      <button key={a.name} aria-label={a.name} className={`flex flex-col items-center ${a.w}`}>
        <span className="flex flex-1 items-center">{a.icon}</span>
        {a.open && <span className="-mt-[2px] h-[2px] w-10 bg-[#76b9ed]" />}
      </button>
    ))}
    <div className="relative z-50 ml-auto flex items-center">
      <button aria-label="显示隐藏的图标"><Svg w={12} h={8}><path d="M1 7l5-5 5 5" stroke="#fff" strokeWidth="1.500" /></Svg></button>
      <Svg w={14} className="ml-3"><path d="M1 13Q2 2 13 1M4 14q1-8 10-9M7 14q1-5 7-6M10 14q0-3 4-3" stroke="#fff" strokeWidth="1.500" /></Svg>
      <Svg w={16} className="ml-[6px]"><path d="M1 6h3l4-4v12L4 10H1zM10 6l4 4M14 6l-4 4" stroke="#fff" /></Svg>
      <span className="ml-2 text-base">中</span>
      <time className="ml-[14px] flex w-[52px] flex-col items-center text-xs leading-[19px]">
        <span>7:09</span>
        <span>2020/3/7</span>
      </time>
      <button aria-label="6 个新通知" className="relative ml-[23px] mr-[25px]">
        <Svg w={16}><path d="M0 1h16v12H7l-4 3v-3H0z" fill="#fff" /><path d="M3 4.500h10M3 7.500h10M3 10.500h6" stroke="#345" /></Svg>
        <span className="absolute left-[7px] top-[7px] flex h-4 w-4 items-center justify-center rounded-full border border-[#aaa] bg-[#555b66] text-[11px] font-bold">6</span>
      </button>
    </div>
  </footer>
);

const Watermark = () => (
  <div className="pointer-events-none absolute bottom-[5px] right-[5px] z-40 h-[62px] w-[206px] bg-white/35">
    <Svg w={60} h={60} className="absolute left-0 top-0">
      <path d="M3 20Q0 5 12 5q16 1 26 14l4 6q-10-12-22-16Q6 6 7 20q2 12 12 20Q6 34 3 20z" fill="#90a4b4" opacity=".9" />
      <path d="M42 22q6 10-4 13-12 2-22-8" stroke="#607888" strokeWidth="2" opacity=".8" />
      <path d="M13 50q-6-12 10-21 10-6 17-7" stroke="#304858" strokeWidth="2" opacity=".7" />
      <path d="M14 49q6 5 18-3 6-4 10-9" stroke="#304858" opacity=".7" />
      <path d="M42 20q16-3 16 11-3 21-22 27 14-12 14-25 1-10-8-13z" fill="#c02840" opacity=".75" />
    </Svg>
    <div className="absolute left-[70px] top-0 whitespace-nowrap font-['Noto_Sans_CJK_SC',sans-serif] text-[30px] font-bold leading-9 text-[#2a9a60]/70">野火论坛</div>
    <div className="absolute left-[59px] top-[38px] whitespace-nowrap font-['Liberation_Sans'] text-base leading-5 text-[#3c6c80]/70">www.proewildfire.cn</div>
  </div>
);

const App = () => {
  return (
    <div className="relative flex h-screen flex-col overflow-hidden bg-[#fcfcfc] font-['Noto_Sans','Noto_Sans_CJK_SC',sans-serif]">
      <TitleBar />
      <TabRow />
      <Ribbon />
      <Workspace />
      <StatusBar />
      <Taskbar />
      <FileMenu />
      <PrepareMenu />
      <Watermark />
    </div>
  );
};

export default App;
